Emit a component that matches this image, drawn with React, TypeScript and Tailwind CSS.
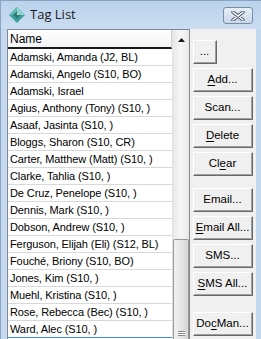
import React from 'react';

const NAMES = [
  'Adamski, Amanda (J2, BL)',
  'Adamski, Angelo (S10, BO)',
  'Adamski, Israel',
  'Agius, Anthony (Tony) (S10, )',
  'Asaaf, Jasinta (S10, )',
  'Bloggs, Sharon (S10, CR)',
  'Carter, Matthew (Matt) (S10, )',
  'Clarke, Tahlia (S10, )',
  'De Cruz, Penelope (S10, )',
  'Dennis, Mark (S10, )',
  'Dobson, Andrew (S10, )',
  'Ferguson, Elijah (Eli) (S12, BL)',
  'Fouché, Briony (S10, BO)',
  'Jones, Kim (S10, )',
  'Muehl, Kristina (S10, )',
  'Rose, Rebecca (Bec) (S10, )',
  'Ward, Alec (S10, )',
];

type Btn = { pre: string; u?: string; post?: string; mt: string; w?: string };

const BUTTONS: Btn[] = [
  { pre: '...', mt: 'mt-0', w: 'w-[24px]' },
  { pre: '', u: 'A', post: 'dd...', mt: 'mt-[4px]' },
  { pre: 'Scan...', mt: 'mt-[4px]' },
  { pre: '', u: 'D', post: 'elete', mt: 'mt-[4px]' },
  { pre: 'Cl', u: 'e', post: 'ar', mt: 'mt-[4px]' },
  { pre: 'Email...', mt: 'mt-[12px]' },
  { pre: '', u: 'E', post: 'mail All...', mt: 'mt-[4px]' },
  { pre: 'SMS...', mt: 'mt-[4px]' },
  { pre: '', u: 'S', post: 'MS All...', mt: 'mt-[4px]' },
  { pre: 'Do', u: 'c', post: 'Man...', mt: 'mt-[16px]' },
];

const WinButton: React.FC<{ b: Btn }> = ({ b }) => (
  <div
    className={`${b.mt} ${b.w ?? 'w-[60px]'} h-[24px] shrink-0 border border-t-white border-l-white border-r-[#696969] border-b-[#696969] bg-[#f0f0f0]`}
  >
    <div className="h-full w-full border-r border-b border-[#a0a0a0] flex items-center justify-center text-[11.5px] leading-none text-black whitespace-nowrap">
      <span>
        {b.pre}
        {b.u && <span className="underline underline-offset-2">{b.u}</span>}
        {b.post}
      </span>
    </div>
  </div>
);

const App: React.FC = () => {
  return (
    <div
      className="w-[261px] h-[339px] overflow-hidden flex flex-col bg-[#c4d8ef] border-t border-l border-[#8aa3c2]"
      style={{ fontFamily: '"Liberation Sans", Arial, sans-serif' }}
    >
      {/* Title bar */}
      <div className="h-[28px] shrink-0 flex items-center bg-gradient-to-b from-[#bcd3ed] to-[#cadcf1]">
        <svg width="18" height="18" viewBox="0 0 18 18" className="ml-[7px]">
          <polygon points="9,1 17,9 9,17 1,9" fill="#3f9f9a" />
          <polygon points="9,1 17,9 9,9" fill="#8fd6cf" />
          <polygon points="9,1 9,9 1,9" fill="#62bdb6" />
          <polygon points="5,9 9,5 13,9 9,13" fill="#2f7d78" />
          <polygon points="9,5 13,9 9,9" fill="#9fe0d8" />
        </svg>
        <span className="ml-[4px] text-[13px] text-[#1b1b1b]" style={{ fontFamily: '"Open Sans", "Noto Sans", sans-serif' }}>
          Tag List
        </span>
        <div className="ml-auto mr-[8px] mt-[1px] w-[30px] h-[17px] rounded-[3px] border border-[#7a8ba4] bg-gradient-to-b from-[#e6eef8] to-[#c9d8ea] flex items-center justify-center">
          <svg width="14" height="10" viewBox="0 0 14 10">
            <path d="M2 1 L12 9 M12 1 L2 9" stroke="#4b5565" strokeWidth="3.4" strokeLinecap="round" />
            <path d="M2 1 L12 9 M12 1 L2 9" stroke="#ffffff" strokeWidth="1.6" strokeLinecap="round" />
          </svg>
        </div>
      </div>

      {/* Client area */}
      <div className="flex-1 flex ml-[6px] mr-[5px] bg-[#f0f0f0]">
        {/* List box */}
        <div className="w-[183px] shrink-0 flex border border-[#828790] border-b-0 bg-white">
          <div className="w-[164px] shrink-0 flex flex-col">
            <div className="h-[19px] shrink-0 flex items-center pl-[2px] bg-gradient-to-b from-white to-[#f3f3f3] border-r border-[#d5d5d5] border-b-2 border-b-[#1a1a1a] text-[12px] text-black">
              Name
            </div>
            {NAMES.map((n, i) => (
              <div
                key={n}
                className={`h-[17px] shrink-0 flex items-center pl-[2px] text-[11px] text-black tracking-[-0.1px] whitespace-nowrap overflow-hidden border-b ${
                  i === NAMES.length - 1 ? 'border-b-[#3c8ee0]' : 'border-b-[#d8d8d8]'
                }`}
              >
                {n}
              </div>
            ))}
          </div>
          {/* Scrollbar */}
          <div className="w-[17px] shrink-0 flex flex-col border-l border-[#e2e2e2] bg-gradient-to-r from-[#e8e8e8] via-[#f7f7f7] to-[#e8e8e8]">
            <div className="h-[17px] shrink-0 flex items-center justify-center pt-[3px]">
              <svg width="7" height="4" viewBox="0 0 7 4">
                <polygon points="3.5,0 7,4 0,4" fill="#1a1a1a" />
              </svg>
            </div>
            <div className="flex-1" />
            <div className="h-[100px] shrink-0 rounded-t-[2px] border border-b-0 border-[#979797] bg-gradient-to-r from-[#f2f2f2] via-[#e6e6e6] to-[#d6d6d6] flex flex-col items-center justify-end pb-[3px]">
              <div className="w-[7px] h-[1px] bg-[#8a8a8a]" />
              <div className="w-[7px] h-[1px] bg-white" />
              <div className="w-[7px] h-[1px] bg-[#8a8a8a]" />
              <div className="w-[7px] h-[1px] bg-white" />
              <div className="w-[7px] h-[1px] bg-[#8a8a8a]" />
            </div>
          </div>
        </div>

        {/* Buttons */}
        <div className="flex-1 flex flex-col pl-[3px] pt-[11px]">
          {BUTTONS.map((b, i) => (
            <WinButton key={i} b={b} />
          ))}
        </div>
      </div>
    </div>
  );
};

export default App;
